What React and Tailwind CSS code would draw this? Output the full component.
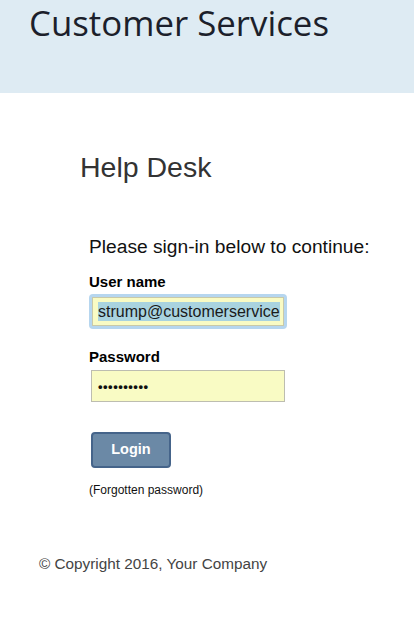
export default function App() {
  return (
    <div className="min-h-[619px] bg-white font-['Liberation_Sans',Arial,sans-serif]">
      <header className="h-[93px] bg-[#deebf3] pl-[29px]">
        <h1 className="font-['Open_Sans',sans-serif] text-[34.8px] leading-[46px] text-[#1c1f2b]">
          Customer Services
        </h1>
      </header>

      <main className="pl-[80px] pt-[56px]">
        <h2 className="text-[28.5px] leading-[37px] text-[#333]">Help Desk</h2>

        <div className="pl-[9px] pt-[49px]">
          <p className="text-[19.2px] leading-[23px] text-[#111]">
            Please sign-in below to continue:
          </p>

          <label className="mt-[15px] block text-[15px] font-bold leading-[18px] text-black">
            User name
          </label>
          <div className="mt-[3px] w-[198px] rounded-[4px] bg-[#b6d6ef] p-[3px]">
            <div className="flex h-[29px] items-center overflow-hidden border border-[#c9c9a8] bg-[#f9fbc4] pl-[5px]">
              <span className="whitespace-nowrap bg-[#a9d3df] text-[16px] leading-[19px] text-[#1a1a1a]">
                strump@customerservice
              </span>
            </div>
          </div>

          <label className="mt-[19px] block text-[15px] font-bold leading-[18px] text-black">
            Password
          </label>
          <div className="ml-[2px] mt-[4px] flex h-[32px] w-[194px] items-center border border-[#bdbdb0] bg-[#f9fbc4] pl-[6px]">
            <span className="text-[13px] font-bold leading-none tracking-[0.5px] text-[#111]">
              ••••••••••
            </span>
          </div>

          <button className="ml-[2px] mt-[30px] h-[36px] w-[80px] rounded-[4px] border-2 border-[#45648a] bg-[#6b89a6] text-[14.5px] font-bold text-white">
            Login
          </button>

          <p className="mt-[15px] text-[12px] leading-[15px] text-[#111]">
            (Forgotten password)
          </p>
        </div>
      </main>

      <footer className="pl-[39px] pt-[56px]">
        <p className="text-[15.3px] leading-[19px] text-[#444]">
          © Copyright 2016, Your Company
        </p>
      </footer>
    </div>
  );
}
